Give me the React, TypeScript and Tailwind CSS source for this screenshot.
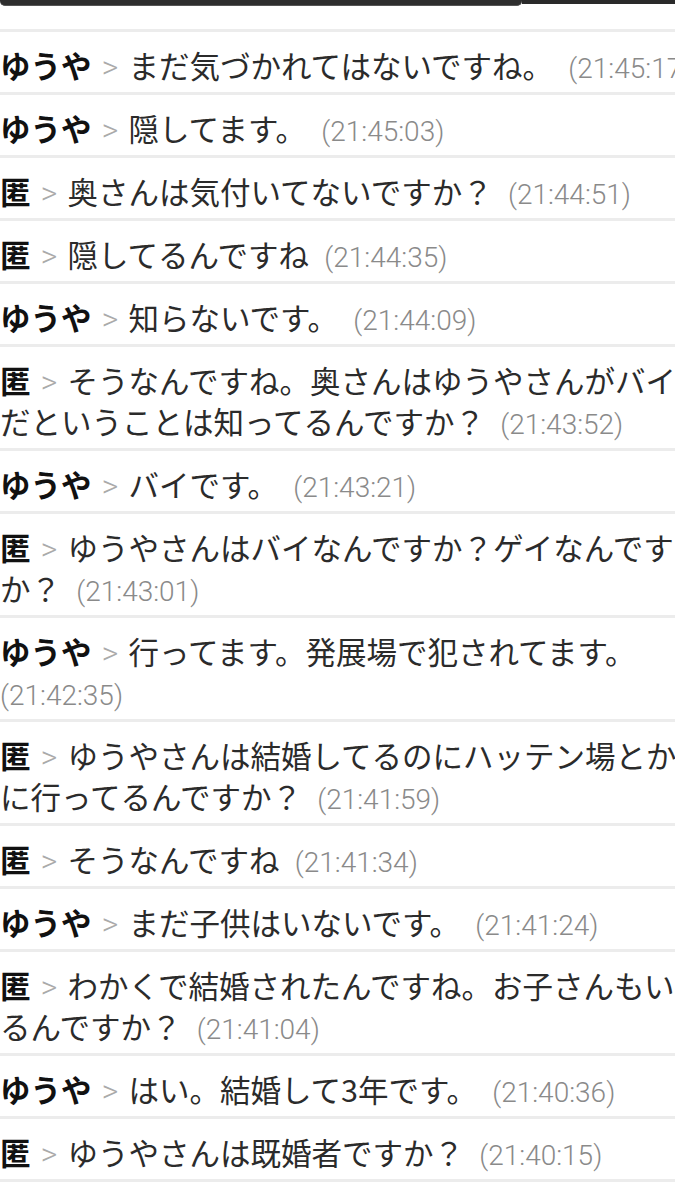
const messages = [
  { name: "ゆうや", text: "まだ気づかれてはないですね。", time: "21:45:17" },
  { name: "ゆうや", text: "隠してます。", time: "21:45:03" },
  { name: "匿", text: "奥さんは気付いてないですか？", time: "21:44:51" },
  { name: "匿", text: "隠してるんですね", time: "21:44:35" },
  { name: "ゆうや", text: "知らないです。", time: "21:44:09" },
  { name: "匿", text: "そうなんですね。奥さんはゆうやさんがバイだということは知ってるんですか？", time: "21:43:52" },
  { name: "ゆうや", text: "バイです。", time: "21:43:21" },
  { name: "匿", text: "ゆうやさんはバイなんですか？ゲイなんですか？", time: "21:43:01" },
  { name: "ゆうや", text: "行ってます。発展場で犯されてます。", time: "21:42:35" },
  { name: "匿", text: "ゆうやさんは結婚してるのにハッテン場とかに行ってるんですか？", time: "21:41:59" },
  { name: "匿", text: "そうなんですね", time: "21:41:34" },
  { name: "ゆうや", text: "まだ子供はいないです。", time: "21:41:24" },
  { name: "匿", text: "わかくで結婚されたんですね。お子さんもいるんですか？", time: "21:41:04" },
  { name: "ゆうや", text: "はい。結婚して3年です。", time: "21:40:36" },
  { name: "匿", text: "ゆうやさんは既婚者ですか？", time: "21:40:15" },
];

export default function App() {
  return (
    <div className="w-[675px] h-[1201px] overflow-hidden bg-white">
      <div className="w-[700px] font-['Noto_Sans_CJK_JP',sans-serif]">
        {/* top toolbar edge */}
        <div className="h-[29px] flex items-start">
          <div className="w-[522px] h-[6px] bg-[#2e2e2e] rounded-b-[5px] border-b border-[#555]" />
          <div className="flex-1 h-[4px] bg-[#2a2a2a]" />
        </div>

        <ul className="border-t-[3px] border-[#ececec]">
          {messages.map((m, i) => (
            <li
              key={i}
              className="pt-[13px] pb-[6px] border-b-[3px] border-[#ececec] text-[30.5px] leading-[41px] text-[#2b2b2b]"
            >
              <span className="font-bold text-[#111] leading-none">{m.name}</span>
              <span className="inline-block w-[37px] text-center font-['Roboto',sans-serif] font-light text-[32px] leading-none text-[#aaa]">
                &gt;
              </span>
              {m.text}
              {"\u2002"}
              <span className="whitespace-nowrap font-['Roboto',sans-serif] font-light text-[28px] leading-none text-[#8a8a8a]">
                ({m.time})
              </span>
            </li>
          ))}
        </ul>
      </div>
    </div>
  );
}
